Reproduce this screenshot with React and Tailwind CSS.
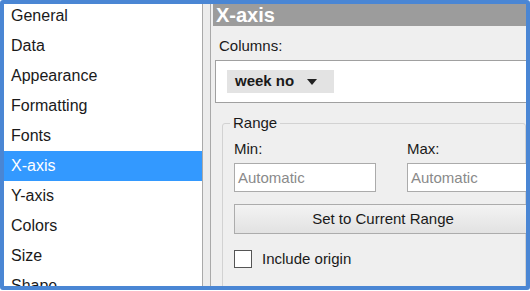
import React from 'react';

const items = ['General', 'Data', 'Appearance', 'Formatting', 'Fonts', 'X-axis', 'Y-axis', 'Colors', 'Size', 'Shape'];

const App = () => {
    const selected = 'X-axis';

    return (
        <div className="w-[530px] h-[291px] overflow-hidden bg-white">
            <div className="w-[530px] h-[290px] border-[4px] border-[#4a86d4] rounded-[3px] flex overflow-hidden font-['Liberation_Sans',Arial,sans-serif] text-[#1a1a1a]">
                {/* category list */}
                <div className="w-[198px] shrink-0 bg-white overflow-hidden">
                    <ul className="-mt-[3px]">
                        {items.map((item) => (
                            <li
                                key={item}
                                className={
                                    item === selected
                                        ? 'h-[30px] flex items-center pl-[7px] text-[16px] bg-[#3399ff] text-white'
                                        : 'h-[30px] flex items-center pl-[7px] text-[16px]'
                                }
                            >
                                {item}
                            </li>
                        ))}
                    </ul>
                </div>

                {/* splitter */}
                <div className="w-[9px] shrink-0 bg-[#ececec] border-l border-r border-[#a9a9a9]"></div>

                {/* settings panel */}
                <div className="flex-1 bg-[#efefef] pl-[2px] overflow-hidden">
                    <div className="h-[22px] bg-[#9c9c9c] text-white font-bold text-[20px] leading-[22px] pl-[3px]">
                        X-axis
                    </div>
                    <div className="pl-[6px] pt-[11px] text-[15px] leading-[18px]">Columns:</div>
                    <div className="ml-[2px] mt-[5px] h-[43px] bg-white border-t border-b border-l border-[#a0a0a0] flex items-center pl-[11px]">
                        <div className="h-[23px] w-[107px] bg-[#e3e3e3] flex items-center pl-[8px] font-bold text-[15px]">
                            week no
                            <svg width="10" height="6" viewBox="0 0 10 6" className="ml-[13px]">
                                <path d="M0 0 L10 0 L5 6 Z" fill="#222" />
                            </svg>
                        </div>
                    </div>

                    {/* Range group */}
                    <div className="relative ml-[9px] mt-[20px] border border-[#d2d2d2] rounded-[3px] pt-[16px] pl-[11px] h-[200px]">
                        <div className="absolute -top-[10px] left-[7px] bg-[#efefef] px-[3px] text-[15px] leading-[18px]">Range</div>
                        <div className="flex gap-[31px] text-[15px] leading-[18px]">
                            <div className="w-[142px] shrink-0">
                                <div>Min:</div>
                                <div className="mt-[5px] h-[29px] border border-[#ababab] bg-white flex items-center pl-[3px] text-[#8a8a8a]">
                                    Automatic
                                </div>
                            </div>
                            <div className="w-[142px] shrink-0">
                                <div>Max:</div>
                                <div className="mt-[5px] h-[29px] border border-[#ababab] bg-white flex items-center pl-[3px] text-[#8a8a8a]">
                                    Automatic
                                </div>
                            </div>
                        </div>
                        <button className="mt-[12px] w-[298px] h-[30px] border border-[#acacac] bg-gradient-to-b from-[#f3f3f3] to-[#e2e2e2] text-[15px] text-[#1a1a1a]">
                            Set to Current Range
                        </button>
                        <label className="mt-[14px] flex items-center gap-[10px] text-[15px]">
                            <span className="w-[18px] h-[18px] border border-[#555] bg-white"></span>
                            Include origin
                        </label>
                        <label className="mt-[15px] flex items-center gap-[10px] text-[15px]">
                            <span className="w-[18px] h-[18px] border border-[#555] bg-white"></span>
                            Show gridlines
                        </label>
                    </div>
                </div>
            </div>
        </div>
    );
};

export default App;
